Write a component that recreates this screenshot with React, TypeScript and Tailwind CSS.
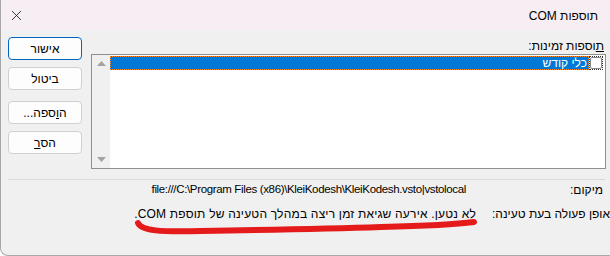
import { X } from "lucide-react";

function Btn({ children, primary }: { children: React.ReactNode; primary?: boolean }) {
  return (
    <button
      className={
        primary
          ? "h-[23px] w-[74px] rounded-[4px] border border-[#0067c0] bg-[#fdfdfd] text-[12px] text-black"
          : "h-[23px] w-[74px] rounded-[4px] border border-[#d0d0d0] bg-[#fdfdfd] text-[12px] text-black"
      }
    >
      {children}
    </button>
  );
}

export default function App() {
  return (
    <div
      dir="rtl"
      className="relative w-[610px] h-[256px] overflow-hidden rounded-bl-[8px] border-l border-b border-[#a8a8a8] bg-[#f0f0f0] font-['Liberation_Sans',sans-serif] text-[12px] text-black"
    >
      {/* title bar */}
      <div className="flex h-[30px] items-center justify-between bg-[#f7eef3] pr-[12px] pl-[7px]">
        <span className="pt-[1px] text-[12px]">תוספות COM</span>
        <X size={17} strokeWidth={1.2} className="text-[#1a1a1a]" />
      </div>

      <div className="flex pt-[7px] pl-[7px] pr-[4px]">
        {/* list side */}
        <div className="flex-1 pt-[1px]">
          <div className="h-[16px] pr-[2px] leading-[16px]">
            <span className="underline">ת</span>וספות זמינות:
          </div>
          <div className="flex h-[115px] border border-[#8e8f8f] bg-white">
            <div className="flex-1 pt-[1px] pr-[2px]">
              <div className="flex h-[13px] items-center">
                <div className="flex h-[14px] w-[14px] items-center justify-center border border-dotted border-[#333]">
                  <div className="h-[12px] w-[12px] rounded-[2px] border border-[#888] bg-white" />
                </div>
                <div className="flex h-[14px] flex-1 items-center border border-dotted border-[#ff8c1a] bg-[#0078d7] pr-[1px] text-white">
                  כלי קודש
                </div>
              </div>
            </div>
            <div className="flex w-[18px] flex-col items-center justify-between bg-[#f0f0f0] py-[6px]">
              <svg width="9" height="5" viewBox="0 0 9 5">
                <path d="M0 5 L4.5 0 L9 5 Z" fill="#a3a3a3" />
              </svg>
              <svg width="9" height="5" viewBox="0 0 9 5">
                <path d="M0 0 L4.5 5 L9 0 Z" fill="#a3a3a3" />
              </svg>
            </div>
          </div>
        </div>

        {/* buttons */}
        <div className="mr-[9px] flex w-[74px] flex-col">
          <Btn primary>אישור</Btn>
          <div className="h-[7px]" />
          <Btn>ביטול</Btn>
          <div className="h-[11px]" />
          <Btn>
            ה<span className="underline">ו</span>ספה...
          </Btn>
          <div className="h-[7px]" />
          <Btn>
            הס<span className="underline">ר</span>
          </Btn>
        </div>
      </div>

      <div className="mr-[5px] ml-[7px] mt-[10px] h-px bg-[#dadada]" />

      <div className="flex h-[20px] items-center pr-[7px]">
        <div className="w-[137px] shrink-0">מיקום:</div>
        <div dir="ltr" className="text-[11.5px] tracking-[-0.35px]">
          file:///C:\Program Files (x86)\KleiKodesh\KleiKodesh.vsto|vstolocal
        </div>
      </div>
      <div className="flex h-[28px] items-center">
        <div className="w-[134px] shrink-0 whitespace-nowrap">אופן פעולה בעת טעינה:</div>
        <div className="tracking-[0.2px]">לא נטען. אירעה שגיאת זמן ריצה במהלך הטעינה של תוספת COM.</div>
      </div>

      {/* red annotation stroke */}
      <svg className="pointer-events-none absolute left-0 top-0" width="610" height="256" viewBox="0 0 610 256">
        <path
          d="M137 223 C140 231, 160 232, 200 231 C260 230, 320 229, 380 227 C420 226, 450 225, 473 222"
          fill="none"
          stroke="#e51b1b"
          strokeWidth="6"
          strokeLinecap="round"
        />
      </svg>
    </div>
  );
}
